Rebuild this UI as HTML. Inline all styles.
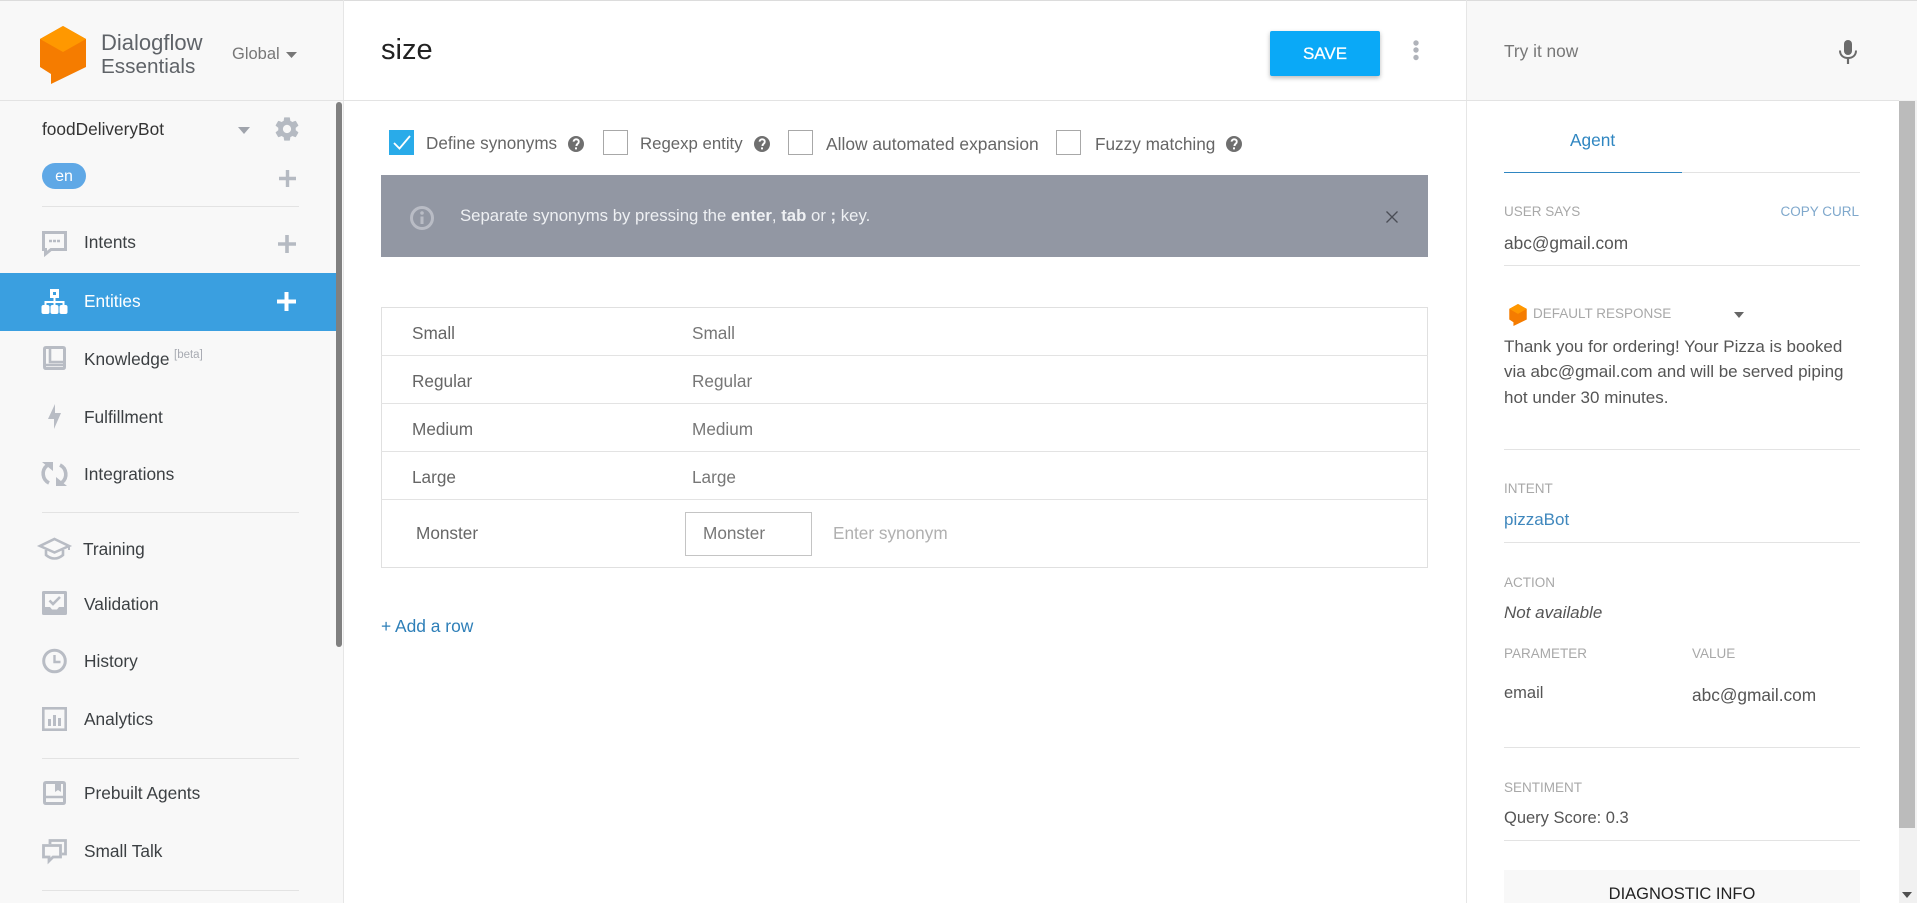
<!DOCTYPE html>
<html><head><meta charset="utf-8"><title>Dialogflow</title>
<style>
html,body{margin:0;padding:0;width:1917px;height:903px;overflow:hidden;background:#fff;font-family:"Liberation Sans",sans-serif;}
.a{position:absolute}
.t{position:absolute;white-space:nowrap;line-height:24px;height:24px;margin-top:-12px}
.nav{font-size:17.3px;color:#3c4043;left:84px}
.lb{font-size:13.5px;color:#a8a8a8;left:1504px}
.v{font-size:17px;color:#555;left:1504px}
.ln{position:absolute;height:1px;background:#e3e3e3}
.cb{position:absolute;top:130px;width:23px;height:23px;border:1px solid #a8a8a8;background:#fff}
.c{font-size:17.1px;color:#666;top:144px}
.r{font-size:17.2px;color:#666}
svg{position:absolute;overflow:visible}
</style></head><body>
<div class="a" style="left:0;top:0;width:1917px;height:1px;background:#dcdcdc"></div>
<div class="a" style="left:0;top:1px;width:343px;height:902px;background:#f8f8f8"></div>
<div class="a" style="left:343px;top:0;width:1px;height:903px;background:#e6e6e6"></div>
<div class="a" style="left:1466px;top:0;width:1px;height:903px;background:#e6e6e6"></div>
<div class="a" style="left:1467px;top:1px;width:450px;height:99px;background:#f8f8f8"></div>
<div class="ln" style="left:0;top:100px;width:1917px"></div>

<!-- logo -->
<svg style="left:40px;top:26px" width="46" height="58" viewBox="0 0 46 58">
<path d="M23 0L46 13V41L11 58V48L0 41V13Z" fill="#f57c00"/>
<path d="M23 0L46 13L23 26L0 13Z" fill="#ff9800"/>
</svg>
<div class="t" style="left:101px;top:43px;font-size:22px;color:#5f6368">Dialogflow</div>
<div class="t" style="left:101px;top:67px;font-size:20.7px;color:#5f6368">Essentials</div>
<div class="t" style="left:232px;top:54px;font-size:16.5px;color:#777">Global</div>
<svg style="left:286px;top:52px" width="11" height="6"><path d="M0 0H11L5.5 6Z" fill="#777"/></svg>

<!-- sidebar header -->
<div class="t" style="left:42px;top:129px;font-size:17.3px;color:#333">foodDeliveryBot</div>
<svg style="left:238px;top:127px" width="12" height="7"><path d="M0 0H12L6 7Z" fill="#a0a4ac"/></svg>
<svg style="left:273px;top:115px" width="28" height="28" viewBox="0 0 24 24"><path fill="#b5bac2" d="M19.43 12.98c.04-.32.07-.64.07-.98s-.03-.66-.07-.98l2.11-1.65c.19-.15.24-.42.12-.64l-2-3.46c-.12-.22-.39-.3-.61-.22l-2.49 1c-.52-.4-1.08-.73-1.69-.98l-.38-2.65C14.46 2.18 14.25 2 14 2h-4c-.25 0-.46.18-.49.42l-.38 2.65c-.61.25-1.17.59-1.69.98l-2.49-1c-.23-.09-.49 0-.61.22l-2 3.46c-.13.22-.07.49.12.64l2.11 1.65c-.04.32-.07.65-.07.98s.03.66.07.98l-2.11 1.65c-.19.15-.24.42-.12.64l2 3.46c.12.22.39.3.61.22l2.49-1c.52.4 1.08.73 1.69.98l.38 2.65c.03.24.24.42.49.42h4c.25 0 .46-.18.49-.42l.38-2.65c.61-.25 1.17-.59 1.69-.98l2.49 1c.23.09.49 0 .61-.22l2-3.46c.12-.22.07-.49-.12-.64l-2.11-1.65zM12 15.5c-1.93 0-3.5-1.57-3.5-3.5s1.57-3.5 3.5-3.5 3.5 1.57 3.5 3.5-1.57 3.5-3.5 3.5z"/></svg>
<div class="a" style="left:42px;top:163px;width:44px;height:26px;border-radius:13px;background:#5fa8e6;color:#fff;font-size:16px;line-height:27px;text-align:center">en</div>
<svg style="left:279px;top:170px" width="17" height="17"><path d="M8.5 0V17M0 8.5H17" stroke="#b5bac2" stroke-width="3.4"/></svg>
<div class="ln" style="left:42px;top:206px;width:257px"></div>

<!-- nav -->
<svg style="left:42px;top:231px" width="25" height="25" viewBox="0 0 25 25"><path d="M1.5 1.5H23.5V18.5H9L3.5 23V18.5H1.5Z" fill="none" stroke="#b8bcc4" stroke-width="3"/><path d="M7 10h3M11 10h3M15 10h3" stroke="#b8bcc4" stroke-width="2.4"/></svg>
<div class="t nav" style="top:242px">Intents</div>
<svg style="left:278px;top:235px" width="18" height="18"><path d="M9 0V18M0 9H18" stroke="#b5bac2" stroke-width="3.6"/></svg>

<div class="a" style="left:0;top:273px;width:336px;height:58px;background:#3a9fe0"></div>
<svg style="left:41px;top:288px" width="27" height="27" viewBox="0 0 27 27"><g fill="#fff"><path d="M9 1h9v9H9z"/><rect x="0.5" y="17" width="8" height="9" rx="2"/><rect x="9.5" y="17" width="8" height="9" rx="2"/><rect x="18.5" y="17" width="8" height="9" rx="2"/></g><path d="M13.5 10V18M4.5 18V14H22.5V18" fill="none" stroke="#fff" stroke-width="2"/><rect x="12" y="4" width="3" height="3" fill="#3a9fe0"/></svg>
<div class="t nav" style="top:301px;color:#fff">Entities</div>
<svg style="left:277px;top:292px" width="19" height="19"><path d="M9.5 0V19M0 9.500H19" stroke="#fff" stroke-width="4"/></svg>

<div class="a" style="left:336px;top:102px;width:6px;height:545px;background:#808080;border-radius:3px"></div>

<svg style="left:43px;top:346px" width="23" height="24" viewBox="0 0 23 24"><path d="M3 1.500H20Q21.500 1.500 21.500 3V21Q21.500 22.500 20 22.500H3Q1.500 22.500 1.500 21V3Q1.500 1.500 3 1.500Z" fill="#f8f8f8" stroke="#b8bcc4" stroke-width="3"/><path d="M7 2V16H21M3 19H21" fill="none" stroke="#b8bcc4" stroke-width="2.600"/></svg>
<div class="t nav" style="top:359px">Knowledge</div>
<div class="t" style="left:174px;top:355px;font-size:11.500px;color:#a8abb2">[beta]</div>

<svg style="left:47px;top:404px" width="15" height="25" viewBox="0 0 15 25"><path d="M8 0V9H14L7 25V15H1Z" fill="#b8bcc4"/></svg>
<div class="t nav" style="top:417px">Fulfillment</div>

<svg style="left:41px;top:461px" width="27" height="26" viewBox="0 0 27 26"><path d="M8 22A10.500 10.500 0 0 1 6 4.500M19 4A10.500 10.500 0 0 1 21 21.500" fill="none" stroke="#b8bcc4" stroke-width="3.600"/><path d="M1 1H12V10ZM26 25H15V16Z" fill="#b8bcc4"/></svg>
<div class="t nav" style="top:474px">Integrations</div>
<div class="ln" style="left:42px;top:512px;width:257px"></div>

<svg style="left:38px;top:537px" width="33" height="23" viewBox="0 0 33 23"><path d="M16.500 2L31 9L16.500 15.500L2 9Z" fill="none" stroke="#b8bcc4" stroke-width="2.600"/><path d="M8 13V18Q12 21.500 16.500 21.500T25 18V13" fill="none" stroke="#b8bcc4" stroke-width="2.600"/><path d="M31 9V13" stroke="#b8bcc4" stroke-width="2"/></svg>
<div class="t nav" style="left:83px;top:549px">Training</div>

<svg style="left:42px;top:591px" width="25" height="24" viewBox="0 0 25 24"><rect width="25" height="24" rx="1.500" fill="#b8bcc4"/><path d="M3 3H22V16H17L15 18.500H10L8 16H3Z" fill="#f8f8f8"/><path d="M7.500 9.500L11 13L18 6" fill="none" stroke="#b8bcc4" stroke-width="2.600"/></svg>
<div class="t nav" style="top:604px">Validation</div>

<svg style="left:42px;top:649px" width="25" height="24" viewBox="0 0 25 24"><circle cx="12.500" cy="12" r="10.800" fill="none" stroke="#b8bcc4" stroke-width="3"/><path d="M12.500 6V13H18.500" fill="none" stroke="#b8bcc4" stroke-width="2.400"/></svg>
<div class="t nav" style="top:661px">History</div>

<svg style="left:42px;top:707px" width="25" height="24" viewBox="0 0 25 24"><rect x="1.300" y="1.300" width="22.400" height="21.400" fill="none" stroke="#b8bcc4" stroke-width="2.600"/><path d="M6 12h3v7H6zM11 8h3v11h-3zM16 11h3v8h-3z" fill="#b8bcc4"/></svg>
<div class="t nav" style="top:719px">Analytics</div>
<div class="ln" style="left:42px;top:758px;width:257px"></div>

<svg style="left:43px;top:781px" width="23" height="24" viewBox="0 0 23 24"><path d="M3 1.500H20Q21.500 1.500 21.500 3V21Q21.500 22.500 20 22.500H3Q1.500 22.500 1.500 21V3Q1.500 1.500 3 1.500Z" fill="none" stroke="#b8bcc4" stroke-width="3"/><path d="M2 16H21" stroke="#b8bcc4" stroke-width="2.600"/><path d="M12 2H18V11L15 9L12 11Z" fill="#b8bcc4"/></svg>
<div class="t nav" style="top:793px">Prebuilt Agents</div>

<svg style="left:42px;top:839px" width="25" height="24" viewBox="0 0 25 24"><path d="M8 5V1.500H23.500V15H20" fill="none" stroke="#b8bcc4" stroke-width="2.800"/><path d="M1.500 6.500H18.500V18H11L7 22V18H1.500Z" fill="none" stroke="#b8bcc4" stroke-width="2.800"/></svg>
<div class="t nav" style="top:851px">Small Talk</div>
<div class="ln" style="left:42px;top:890px;width:257px"></div>

<!-- main header -->
<div class="t" style="left:381px;top:50px;font-size:29px;color:#222">size</div>
<div class="a" style="left:1270px;top:31px;width:110px;height:45px;background:#0aa9f7;border-radius:2px;box-shadow:0 2px 5px rgba(0,0,0,.28);color:#fff;font-size:17px;line-height:46px;text-align:center;-webkit-text-stroke:.25px #fff">SAVE</div>
<svg style="left:1412px;top:40px" width="8" height="21"><circle cx="4" cy="3" r="2.700" fill="#b0b3ba"/><circle cx="4" cy="10" r="2.700" fill="#b0b3ba"/><circle cx="4" cy="17.500" r="2.700" fill="#b0b3ba"/></svg>

<!-- options -->
<div class="a" style="left:389px;top:130px;width:25px;height:25px;background:#29abe9"></div>
<svg style="left:389px;top:130px" width="25" height="25"><path d="M5 13L10.500 18.500L21 6" fill="none" stroke="#fff" stroke-width="1.800"/></svg>
<div class="t c" style="left:426px">Define synonyms</div>
<svg style="left:568px;top:136px" width="16" height="16" viewBox="0 0 24 24"><path fill="#6f6f6f" d="M12 0a12 12 0 1 0 0 24a12 12 0 0 0 0-24zM13.500 20h-3v-3h3zM16.600 11.500c-.9 1-2.100 1.700-2.300 3.500h-3c0-2.700 1.500-3.700 2.500-4.700c.6-.6 1-1.100 1-2c0-1.100-.9-2-2.500-2c-1.400 0-2.300.9-2.500 2.200H7c.2-3 2.300-5 5.300-5c3 0 5.200 1.800 5.200 4.500c0 1.400-.3 2.500-.9 3.500z"/></svg>
<div class="cb" style="left:603px"></div>
<div class="t c" style="left:640px;font-size:16.8px">Regexp entity</div>
<svg style="left:754px;top:136px" width="16" height="16" viewBox="0 0 24 24"><path fill="#6f6f6f" d="M12 0a12 12 0 1 0 0 24a12 12 0 0 0 0-24zM13.500 20h-3v-3h3zM16.600 11.500c-.9 1-2.100 1.700-2.300 3.500h-3c0-2.700 1.500-3.700 2.500-4.700c.6-.6 1-1.100 1-2c0-1.100-.9-2-2.500-2c-1.400 0-2.300.9-2.500 2.200H7c.2-3 2.300-5 5.300-5c3 0 5.200 1.800 5.200 4.500c0 1.400-.3 2.500-.9 3.500z"/></svg>
<div class="cb" style="left:788px"></div>
<div class="t c" style="left:826px;top:143.500px;font-size:17.4px">Allow automated expansion</div>
<div class="cb" style="left:1056px"></div>
<div class="t c" style="left:1095px;font-size:17.2px">Fuzzy matching</div>
<svg style="left:1226px;top:136px" width="16" height="16" viewBox="0 0 24 24"><path fill="#6f6f6f" d="M12 0a12 12 0 1 0 0 24a12 12 0 0 0 0-24zM13.500 20h-3v-3h3zM16.600 11.500c-.9 1-2.100 1.700-2.300 3.500h-3c0-2.700 1.500-3.700 2.500-4.700c.6-.6 1-1.100 1-2c0-1.100-.9-2-2.500-2c-1.400 0-2.300.9-2.500 2.200H7c.2-3 2.300-5 5.300-5c3 0 5.200 1.800 5.200 4.500c0 1.400-.3 2.500-.9 3.500z"/></svg>

<!-- banner -->
<div class="a" style="left:381px;top:175px;width:1047px;height:82px;background:#9297a3"></div>
<svg style="left:410px;top:206px" width="24" height="24" viewBox="0 0 24 24"><circle cx="12" cy="12" r="10.500" fill="none" stroke="#b9bcc5" stroke-width="3"/><path d="M12 10.500V18" stroke="#b9bcc5" stroke-width="3"/><circle cx="12" cy="7" r="1.800" fill="#b9bcc5"/></svg>
<div class="t" style="left:460px;top:216px;font-size:16.75px;color:#eef0f3">Separate synonyms by pressing the <b>enter</b>, <b>tab</b> or <b>;</b> key.</div>
<svg style="left:1386px;top:211px" width="12" height="12"><path d="M.5 .5L11.500 11.500M11.500 .5L.5 11.500" stroke="#4a4d55" stroke-width="1.300"/></svg>

<!-- table -->
<div class="a" style="left:381px;top:307px;width:1045px;height:259px;border:1px solid #e0e0e0"></div>
<div class="ln" style="left:381px;top:355px;width:1047px"></div>
<div class="ln" style="left:381px;top:403px;width:1047px"></div>
<div class="ln" style="left:381px;top:451px;width:1047px"></div>
<div class="ln" style="left:381px;top:499px;width:1047px"></div>
<div class="t r" style="left:412px;top:333px">Small</div><div class="t r" style="left:692px;top:333px;color:#777">Small</div>
<div class="t r" style="left:412px;top:381px">Regular</div><div class="t r" style="left:692px;top:381px;color:#777">Regular</div>
<div class="t r" style="left:412px;top:429px">Medium</div><div class="t r" style="left:692px;top:429px;color:#777">Medium</div>
<div class="t r" style="left:412px;top:477px">Large</div><div class="t r" style="left:692px;top:477px;color:#777">Large</div>
<div class="t r" style="left:416px;top:533px">Monster</div>
<div class="a" style="left:685px;top:512px;width:125px;height:42px;border:1px solid #c4c4c4;box-sizing:content-box"></div>
<div class="t r" style="left:703px;top:533px;color:#777">Monster</div>
<div class="t r" style="left:833px;top:533px;color:#b0b0b0">Enter synonym</div>
<div class="t" style="left:381px;top:626px;font-size:17.4px;color:#2e7fb8">+ Add a row</div>

<!-- right panel -->
<div class="t" style="left:1504px;top:51px;font-size:17.3px;color:#777">Try it now</div>
<svg style="left:1839px;top:40px" width="18" height="24" viewBox="0 0 18 24"><rect x="5" y="0" width="8" height="15" rx="4" fill="#6b6b6b"/><path d="M1 10.500C1 15.500 4.500 18 9 18S17 15.500 17 10.500" fill="none" stroke="#6b6b6b" stroke-width="2"/><path d="M9 18V24" stroke="#6b6b6b" stroke-width="2.200"/></svg>

<div class="a" style="left:1899px;top:100px;width:18px;height:803px;background:#f1f1f1"></div>
<div class="a" style="left:1899px;top:101px;width:16px;height:727px;background:#bbb"></div>
<svg style="left:1902px;top:892px" width="10" height="6"><path d="M0 0H10L5 6Z" fill="#505050"/></svg>

<div class="t" style="left:1570px;top:140px;font-size:17.3px;color:#2f86c1">Agent</div>
<div class="ln" style="left:1504px;top:172px;width:356px"></div>
<div class="a" style="left:1504px;top:172px;width:178px;height:1px;background:#2f86c1"></div>
<div class="t lb" style="top:212px">USER SAYS</div>
<div class="t" style="right:58px;top:212px;font-size:13.500px;color:#7fa8cc">COPY CURL</div>
<div class="t v" style="top:243px;font-size:17.3px">abc@gmail.com</div>
<div class="ln" style="left:1504px;top:265px;width:356px"></div>
<svg style="left:1509px;top:304px" width="18" height="22" viewBox="0 0 46 58"><path d="M23 0L46 13V41L11 58V48L0 41V13Z" fill="#f57c00"/><path d="M23 0L46 13L23 26L0 13Z" fill="#ff9800"/></svg>
<div class="t lb" style="left:1533px;top:314px">DEFAULT RESPONSE</div>
<svg style="left:1734px;top:312px" width="10" height="6"><path d="M0 0H10L5 6Z" fill="#666"/></svg>
<div class="t v" style="top:347px">Thank you for ordering! Your Pizza is booked</div>
<div class="t v" style="top:372px">via abc@gmail.com and will be served piping</div>
<div class="t v" style="top:398px">hot under 30 minutes.</div>
<div class="ln" style="left:1504px;top:449px;width:356px"></div>
<div class="t lb" style="top:489px">INTENT</div>
<div class="t v" style="top:520px;color:#3f87bd">pizzaBot</div>
<div class="ln" style="left:1504px;top:542px;width:356px"></div>
<div class="t lb" style="top:583px">ACTION</div>
<div class="t v" style="top:613px;font-style:italic">Not available</div>
<div class="t lb" style="top:654px">PARAMETER</div>
<div class="t lb" style="left:1692px;top:654px">VALUE</div>
<div class="t v" style="top:693px;font-size:16.5px">email</div>
<div class="t v" style="left:1692px;top:695px;font-size:17.3px">abc@gmail.com</div>
<div class="ln" style="left:1504px;top:747px;width:356px"></div>
<div class="t lb" style="top:788px">SENTIMENT</div>
<div class="t v" style="top:818px;font-size:16.5px">Query Score: 0.3</div>
<div class="ln" style="left:1504px;top:840px;width:356px"></div>
<div class="a" style="left:1504px;top:870px;width:356px;height:33px;background:#f8f8f8"></div>
<div class="t" style="left:1504px;width:356px;text-align:center;top:894px;font-size:16.500px;color:#222">DIAGNOSTIC INFO</div>
</body></html>
